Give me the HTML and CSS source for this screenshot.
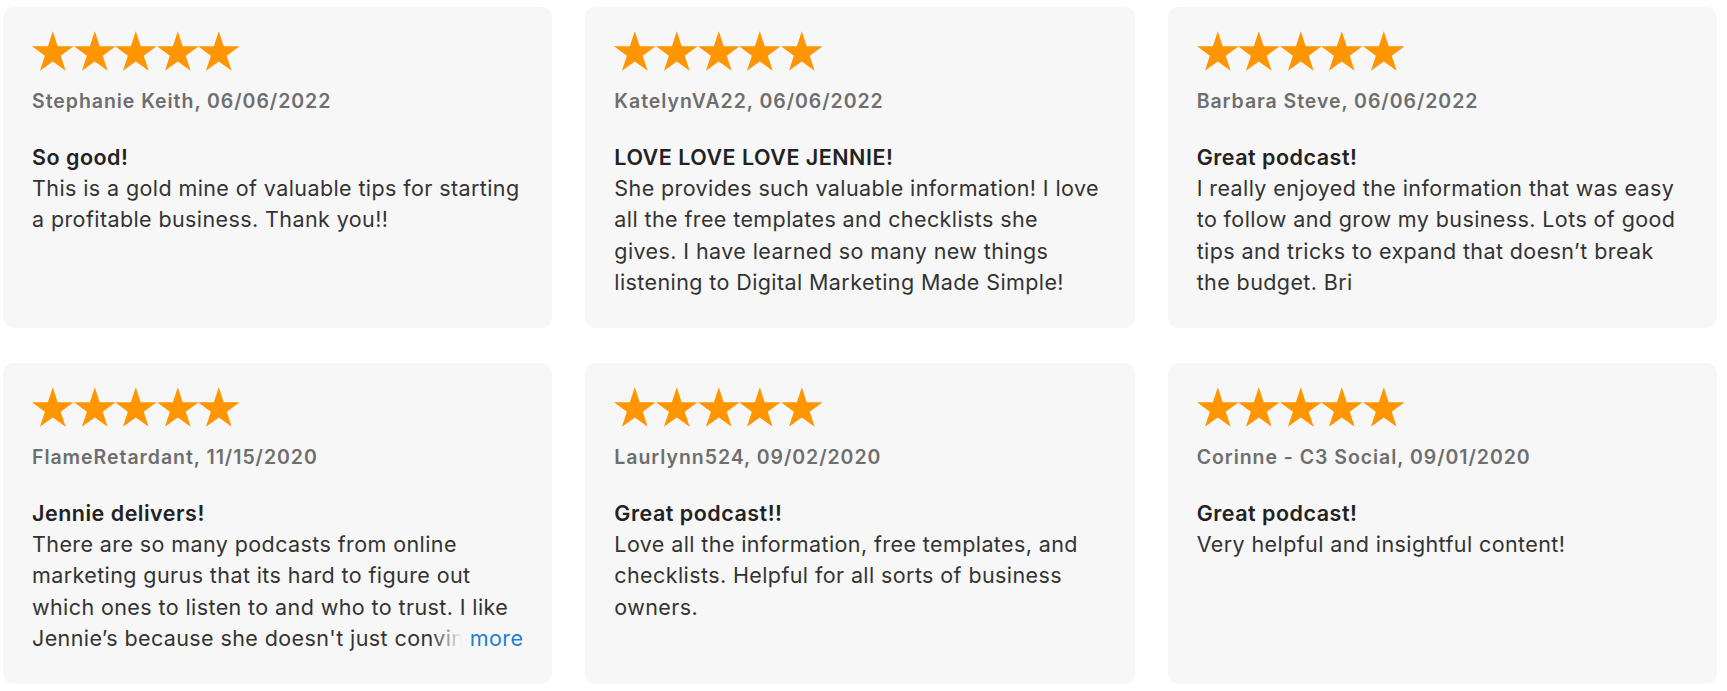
FILE: index.html
```html
<!DOCTYPE html>
<html lang="en">
<head>
<meta charset="utf-8">
<title>Reviews</title>
<link rel="stylesheet" href="styles.css">
</head>
<body>
<svg class="defs" width="0" height="0" aria-hidden="true">
  <defs>
    <symbol id="star" viewBox="-0.951 -1 1.902 1.809">
      <polygon points="0,-1 0.2245,-0.309 0.9511,-0.309 0.3633,0.118 0.5878,0.809 0,0.382 -0.5878,0.809 -0.3633,0.118 -0.9511,-0.309 -0.2245,-0.309"/>
    </symbol>
  </defs>
</svg>
<main class="reviews">
  <article class="card">
    <div class="stars"><svg class="star"><use href="#star"/></svg><svg class="star"><use href="#star"/></svg><svg class="star"><use href="#star"/></svg><svg class="star"><use href="#star"/></svg><svg class="star"><use href="#star"/></svg></div>
    <p class="author">Stephanie Keith, 06/06/2022</p>
    <h3 class="title">So good!</h3>
    <p class="body">This is a gold mine of valuable tips for starting a profitable business. Thank you!!</p>
  </article>
  <article class="card">
    <div class="stars"><svg class="star"><use href="#star"/></svg><svg class="star"><use href="#star"/></svg><svg class="star"><use href="#star"/></svg><svg class="star"><use href="#star"/></svg><svg class="star"><use href="#star"/></svg></div>
    <p class="author">KatelynVA22, 06/06/2022</p>
    <h3 class="title">LOVE LOVE LOVE JENNIE!</h3>
    <p class="body">She provides such valuable information! I love all the free templates and checklists she gives. I have learned so many new things listening to Digital Marketing Made Simple!</p>
  </article>
  <article class="card">
    <div class="stars"><svg class="star"><use href="#star"/></svg><svg class="star"><use href="#star"/></svg><svg class="star"><use href="#star"/></svg><svg class="star"><use href="#star"/></svg><svg class="star"><use href="#star"/></svg></div>
    <p class="author">Barbara Steve, 06/06/2022</p>
    <h3 class="title">Great podcast!</h3>
    <p class="body">I really enjoyed the information that was easy to follow and grow my business. Lots of good tips and tricks to expand that doesn’t break the budget. Bri</p>
  </article>
  <article class="card">
    <div class="stars"><svg class="star"><use href="#star"/></svg><svg class="star"><use href="#star"/></svg><svg class="star"><use href="#star"/></svg><svg class="star"><use href="#star"/></svg><svg class="star"><use href="#star"/></svg></div>
    <p class="author">FlameRetardant, 11/15/2020</p>
    <h3 class="title">Jennie delivers!</h3>
    <div class="clamp">
      <p class="body">There are so many podcasts from online marketing gurus that its hard to figure out which ones to listen to and who to trust. I like Jennie’s because she doesn't just convince you to buy something, she actually teaches you how to do it yourself.</p>
      <button class="more" type="button">more</button>
    </div>
  </article>
  <article class="card">
    <div class="stars"><svg class="star"><use href="#star"/></svg><svg class="star"><use href="#star"/></svg><svg class="star"><use href="#star"/></svg><svg class="star"><use href="#star"/></svg><svg class="star"><use href="#star"/></svg></div>
    <p class="author">Laurlynn524, 09/02/2020</p>
    <h3 class="title">Great podcast!!</h3>
    <p class="body">Love all the information, free templates, and checklists. Helpful for all sorts of business owners.</p>
  </article>
  <article class="card">
    <div class="stars"><svg class="star"><use href="#star"/></svg><svg class="star"><use href="#star"/></svg><svg class="star"><use href="#star"/></svg><svg class="star"><use href="#star"/></svg><svg class="star"><use href="#star"/></svg></div>
    <p class="author">Corinne - C3 Social, 09/01/2020</p>
    <h3 class="title">Great podcast!</h3>
    <p class="body">Very helpful and insightful content!</p>
  </article>
</main>
</body>
</html>
```

FILE: styles.css
```css
* {
  box-sizing: border-box;
}

html, body {
  margin: 0;
  background: #ffffff;
}

body {
  font-family: Inter, "Noto Sans", "Liberation Sans", sans-serif;
  -webkit-font-smoothing: antialiased;
}

.defs {
  position: absolute;
  width: 0;
  height: 0;
  overflow: hidden;
}

.reviews {
  display: grid;
  grid-template-columns: repeat(3, 1fr);
  grid-auto-rows: 321px;
  column-gap: 33px;
  row-gap: 35px;
  padding: 7px 10px 7px 3px;
}

.card {
  background: #f7f7f7;
  border-radius: 10px;
  padding: 24px 29px 20px 29px;
  display: flex;
  flex-direction: column;
  min-width: 0;
}

.stars {
  display: flex;
  height: 40px;
}

.star {
  width: 41.6px;
  height: 40px;
  fill: #ff9500;
}

.author {
  margin: 18px 0 0 0;
  font-size: 19.5px;
  line-height: 24px;
  font-weight: 600;
  color: #6e6e6e;
  letter-spacing: 0.95px;
}

.title {
  margin: 30px 0 0 0;
  font-size: 21.5px;
  line-height: 29.5px;
  font-weight: 600;
  color: #222222;
  letter-spacing: 0.5px;
}

.body {
  margin: 0;
  font-size: 21.5px;
  line-height: 31.6px;
  font-weight: 400;
  color: #333333;
  letter-spacing: 0.4px;
}

.clamp {
  position: relative;
  max-height: 126.4px;
  overflow: hidden;
}

.more {
  position: absolute;
  right: 0;
  bottom: 0;
  border: 0;
  margin: 0;
  padding: 0 0 0 38px;
  font: inherit;
  font-size: 21.5px;
  line-height: 31.6px;
  letter-spacing: 0.4px;
  color: #1f7fd6;
  background: linear-gradient(to right, rgba(247, 247, 247, 0) 0, #f7f7f7 30px, #f7f7f7 100%);
  cursor: pointer;
}
```
